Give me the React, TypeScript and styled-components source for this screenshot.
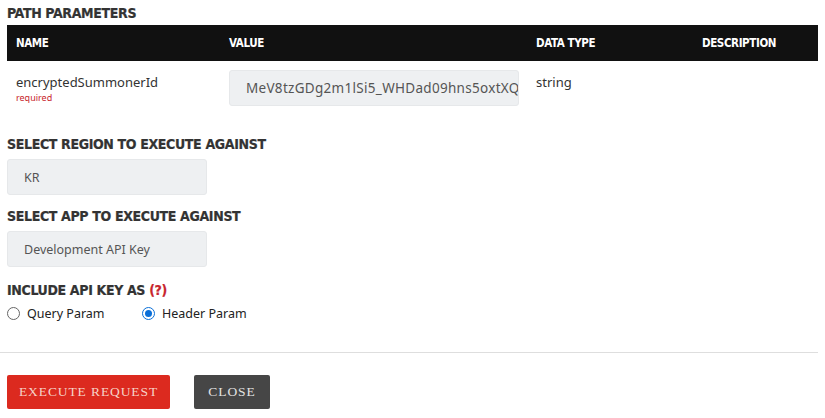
import React from "react";
import styled, { createGlobalStyle } from "styled-components";

const Global = createGlobalStyle`
  html, body { margin: 0; padding: 0; background: #fff; }
  body { font-family: "Noto Sans", "Open Sans", sans-serif; color: #333; }
`;

const Page = styled.div`
  width: 825px;
  height: 418px;
  overflow: hidden;
  box-sizing: border-box;
  padding: 4px 7px 0 7px;
`;

const Heading = styled.h3<{ $mt?: number }>`
  margin: ${(p) => p.$mt ?? 0}px 0 0 0;
  font-family: "Liberation Sans Narrow", "Arial Narrow", "DejaVu Sans Condensed", sans-serif;
  font-weight: 700;
  font-size: 14px;
  line-height: 18px;
  color: #333;
  letter-spacing: -0.35px;
  -webkit-text-stroke: 0.2px #333;
`;

const Help = styled.span`
  color: #c8252c;
  -webkit-text-stroke: 0.2px #c8252c;
`;

const Table = styled.div`
  margin-top: 3px;
  width: 811px;
`;

const Row = styled.div<{ $head?: boolean }>`
  display: grid;
  grid-template-columns: 213px 307px 166px 1fr;
  align-items: ${(p) => (p.$head ? "center" : "start")};
  background: ${(p) => (p.$head ? "#111" : "transparent")};
  height: ${(p) => (p.$head ? "36px" : "auto")};
  padding: ${(p) => (p.$head ? "0 9px" : "9px 9px 0 9px")};
`;

const HeadCell = styled.div`
  font-family: "Liberation Sans Narrow", "Arial Narrow", "DejaVu Sans Condensed", sans-serif;
  font-weight: 700;
  font-size: 11.5px;
  color: #fff;
  letter-spacing: -0.4px;
`;

const NameCell = styled.div`
  display: flex;
  flex-direction: column;
  padding-top: 3px;
`;

const ParamName = styled.span`
  font-size: 13px;
  line-height: 18px;
  color: #333;
`;

const Required = styled.span`
  font-size: 9px;
  line-height: 12px;
  color: #c8252c;
  margin-top: 1px;
`;

const Field = styled.div<{ $w: number; $wide?: boolean }>`
  width: ${(p) => p.$w}px;
  height: 36px;
  box-sizing: border-box;
  background: #eef0f2;
  border: 1px solid #e6e8ea;
  border-radius: 3px;
  padding: 0 0 0 16px;
  display: flex;
  align-items: center;
  font-size: ${(p) => (p.$wide ? "13.5px" : "12.5px")};
  letter-spacing: ${(p) => (p.$wide ? "0.3px" : "0")};
  color: #555;
  white-space: nowrap;
  overflow: hidden;
`;

const TypeCell = styled.div`
  font-size: 13px;
  line-height: 18px;
  color: #333;
  padding-top: 3px;
`;

const Block = styled.div<{ $mt: number }>`
  display: flex;
  flex-direction: column;
  gap: 6px;
  margin-top: ${(p) => p.$mt}px;
`;

const Radios = styled.div`
  display: flex;
  align-items: center;
  margin-top: 4px;
  height: 20px;
`;

const RadioLabel = styled.label<{ $w?: number }>`
  display: flex;
  align-items: center;
  gap: 7px;
  width: ${(p) => (p.$w ? `${p.$w}px` : "auto")};
  font-size: 12.5px;
  color: #222;
`;

const Dot = styled.span<{ $on?: boolean }>`
  width: 13px;
  height: 13px;
  box-sizing: border-box;
  border-radius: 50%;
  border: 1px solid ${(p) => (p.$on ? "#0a6fd8" : "#666")};
  display: inline-flex;
  align-items: center;
  justify-content: center;
  background: #fff;
  &::after {
    content: "";
    width: 7px;
    height: 7px;
    border-radius: 50%;
    background: ${(p) => (p.$on ? "#0a6fd8" : "transparent")};
  }
`;

const Divider = styled.hr`
  border: 0;
  border-top: 1px solid #dedede;
  margin: 29px -7px 0 -7px;
  width: 818px;
`;

const Actions = styled.div`
  display: flex;
  gap: 24px;
  margin-top: 22px;
`;

const Button = styled.button<{ $variant: "primary" | "dark" }>`
  height: 34px;
  border: 0;
  border-radius: 2px;
  padding: 0;
  white-space: nowrap;
  font-family: "Liberation Serif", "DejaVu Serif", serif;
  font-size: 13.5px;
  letter-spacing: 0.9px;
  text-transform: uppercase;
  background: ${(p) => (p.$variant === "primary" ? "#dc2a1f" : "#464646")};
  color: ${(p) => (p.$variant === "primary" ? "#f6d3c8" : "#e2e2e2")};
  width: ${(p) => (p.$variant === "primary" ? "163px" : "76px")};
`;

export default function App() {
  return (
    <Page>
      <Global />
      <Heading>PATH PARAMETERS</Heading>
      <Table>
        <Row $head>
          <HeadCell>NAME</HeadCell>
          <HeadCell>VALUE</HeadCell>
          <HeadCell>DATA TYPE</HeadCell>
          <HeadCell>DESCRIPTION</HeadCell>
        </Row>
        <Row>
          <NameCell>
            <ParamName>encryptedSummonerId</ParamName>
            <Required>required</Required>
          </NameCell>
          <div>
            <Field $w={290} $wide>MeV8tzGDg2m1lSi5_WHDad09hns5oxtXQ4</Field>
          </div>
          <TypeCell>string</TypeCell>
          <div />
        </Row>
      </Table>

      <Block $mt={29}>
        <Heading>SELECT REGION TO EXECUTE AGAINST</Heading>
        <Field $w={200}>KR</Field>
      </Block>
      <Block $mt={12}>
        <Heading>SELECT APP TO EXECUTE AGAINST</Heading>
        <Field $w={200}>Development API Key</Field>
      </Block>
      <Heading $mt={14}>
        INCLUDE API KEY AS <Help>(?)</Help>
      </Heading>
      <Radios>
        <RadioLabel $w={135}>
          <Dot />
          Query Param
        </RadioLabel>
        <RadioLabel>
          <Dot $on />
          Header Param
        </RadioLabel>
      </Radios>
      <Divider />
      <Actions>
        <Button $variant="primary">Execute Request</Button>
        <Button $variant="dark">Close</Button>
      </Actions>
    </Page>
  );
}
